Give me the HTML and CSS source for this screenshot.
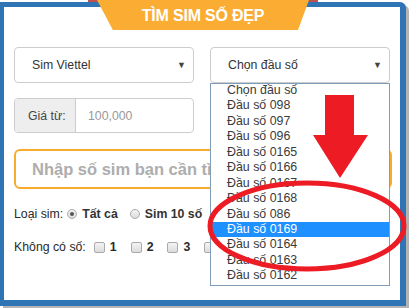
FILE: index.html
```html
<!DOCTYPE html>
<html lang="vi">
<head>
<meta charset="utf-8">
<title>Tìm sim số đẹp</title>
<link rel="stylesheet" href="styles.css">
</head>
<body>
<div class="ribbon"></div>
<div class="frame">
  <div class="tab"><span>TÌM SIM SỐ ĐẸP</span></div>
  <div class="row selects">
    <div class="select"><span>Sim Viettel</span><i class="caret">▼</i></div>
    <div class="select"><span>Chọn đầu số</span><i class="caret">▼</i></div>
  </div>
  <div class="group">
    <span class="addon">Giá từ:</span>
    <span class="field">100,000</span>
  </div>
  <div class="search">Nhập số sim bạn cần tìm</div>
  <div class="line">
    <span class="lbl">Loại sim:</span>
    <span class="radio on"></span><span class="opt">Tất cả</span>
    <span class="radio"></span><span class="opt">Sim 10 số</span>
  </div>
  <div class="line">
    <span class="lbl">Không có số:</span>
    <span class="chk"></span><span class="num">1</span>
    <span class="chk"></span><span class="num">2</span>
    <span class="chk"></span><span class="num">3</span>
    <span class="chk"></span><span class="num">4</span>
  </div>
</div>
<ul class="list">
  <li>Chọn đầu số</li>
  <li>Đầu số 098</li>
  <li>Đầu số 097</li>
  <li>Đầu số 096</li>
  <li>Đầu số 0165</li>
  <li>Đầu số 0166</li>
  <li>Đầu số 0167</li>
  <li>Đầu số 0168</li>
  <li>Đầu số 086</li>
  <li class="sel">Đầu số 0169</li>
  <li>Đầu số 0164</li>
  <li>Đầu số 0163</li>
  <li>Đầu số 0162</li>
</ul>
<svg class="marks" width="412" height="308" viewBox="0 0 412 308">
  <polygon points="325,95 354,95 354,135 368,135 340,178 313,135 325,135" fill="#ed1c24"/>
  <ellipse cx="307" cy="226" rx="97" ry="43" fill="none" stroke="#ed1c24" stroke-width="5"/>
</svg>
</body>
</html>
```
FILE: styles.css
```css
html, body {
  margin: 0;
  padding: 0;
  background: #fff;
  font-family: "Liberation Sans", Arial, sans-serif;
  color: #333;
  width: 412px;
  height: 308px;
  overflow: hidden;
  position: relative;
}
.ribbon {
  position: absolute;
  left: 88px;
  top: 0;
  width: 230px;
  height: 3px;
  background: #c0504d;
}
.frame {
  position: relative;
  margin-top: 2px;
  border-style: solid;
  border-color: #2f74b4;
  border-width: 5px 6px 6px 4px;
  border-top-right-radius: 6px;
  background: #fff;
  box-shadow: 3px 3px 0 #b4b4b4;
  padding: 40px 0 0 10px;
  box-sizing: content-box;
  width: 386px;
  height: 253px;
}
.tab {
  position: absolute;
  left: 93px;
  top: -7px;
  width: 212px;
  height: 30px;
  background: #fbad33;
  clip-path: polygon(0 0, 100% 0, 94.8% 100%, 7.5% 100%);
  display: flex;
  align-items: center;
  justify-content: center;
}
.tab span {
  color: #fff;
  font-weight: bold;
  font-size: 16px;
  padding-top: 1px;
  letter-spacing: -0.2px;
}
.row {
  display: flex;
  gap: 16px;
}
.select {
  width: 180px;
  height: 36px;
  box-sizing: border-box;
  border: 1px solid #ccc;
  border-radius: 4px;
  display: flex;
  align-items: center;
  padding: 0 7px 0 17px;
  font-size: 12.3px;
  color: #333;
}
.select span { flex: 1; }
.caret {
  font-style: normal;
  font-size: 9px;
  color: #444;
}
.group {
  margin-top: 15px;
  width: 180px;
  height: 35px;
  box-sizing: border-box;
  border: 1px solid #ccc;
  border-radius: 4px;
  display: flex;
  font-size: 12.3px;
}
.addon {
  width: 61px;
  background: #eee;
  border-right: 1px solid #ccc;
  display: flex;
  align-items: center;
  padding-left: 13px;
  box-sizing: border-box;
  border-radius: 3px 0 0 3px;
  color: #444;
}
.field {
  display: flex;
  align-items: center;
  padding-left: 12px;
  color: #999;
}
.search {
  margin-top: 16px;
  width: 378px;
  height: 40px;
  box-sizing: border-box;
  border: 2px solid #f9ab2e;
  border-radius: 6px;
  display: flex;
  align-items: center;
  padding-left: 16px;
  font-size: 16.5px;
  font-weight: bold;
  color: #adadad;
}
.line {
  display: flex;
  align-items: center;
  height: 20px;
  font-size: 12.3px;
  color: #2a2a2a;
}
.search + .line { margin-top: 15px; }
.line + .line { margin-top: 13px; }
.lbl { margin-right: 4px; }
.radio {
  width: 10px;
  height: 10px;
  border: 1px solid #aaa;
  border-radius: 50%;
  background: linear-gradient(#f4f4f4, #dcdcdc);
  box-sizing: border-box;
  position: relative;
  margin-right: 5px;
}
.radio.on::after {
  content: "";
  position: absolute;
  left: 2px;
  top: 2px;
  width: 4px;
  height: 4px;
  border-radius: 50%;
  background: #555;
}
.opt {
  font-weight: bold;
  color: #333;
  margin-right: 12px;
}
.chk {
  width: 11px;
  height: 11px;
  border: 1px solid #aaa;
  border-radius: 2px;
  box-sizing: border-box;
  background: linear-gradient(#f4f4f4, #dcdcdc);
  margin: 0 5px 0 4px;
}
.num {
  font-weight: bold;
  margin-right: 10px;
}
.list {
  position: absolute;
  left: 210px;
  top: 83px;
  width: 180px;
  height: 203px;
  box-sizing: border-box;
  margin: 0;
  padding: 0;
  list-style: none;
  background: #fff;
  border: 1px solid #7f9db9;
  overflow: hidden;
  font-size: 12.4px;
  color: #3a3a3a;
}
.list li {
  height: 15.45px;
  line-height: 15.45px;
  padding-left: 16px;
  white-space: nowrap;
}
.list li:first-child { margin-top: -1px; }
.list li.sel {
  background: #1e90ff;
  color: #fff;
}
.marks {
  position: absolute;
  left: 0;
  top: 0;
  pointer-events: none;
}
```
